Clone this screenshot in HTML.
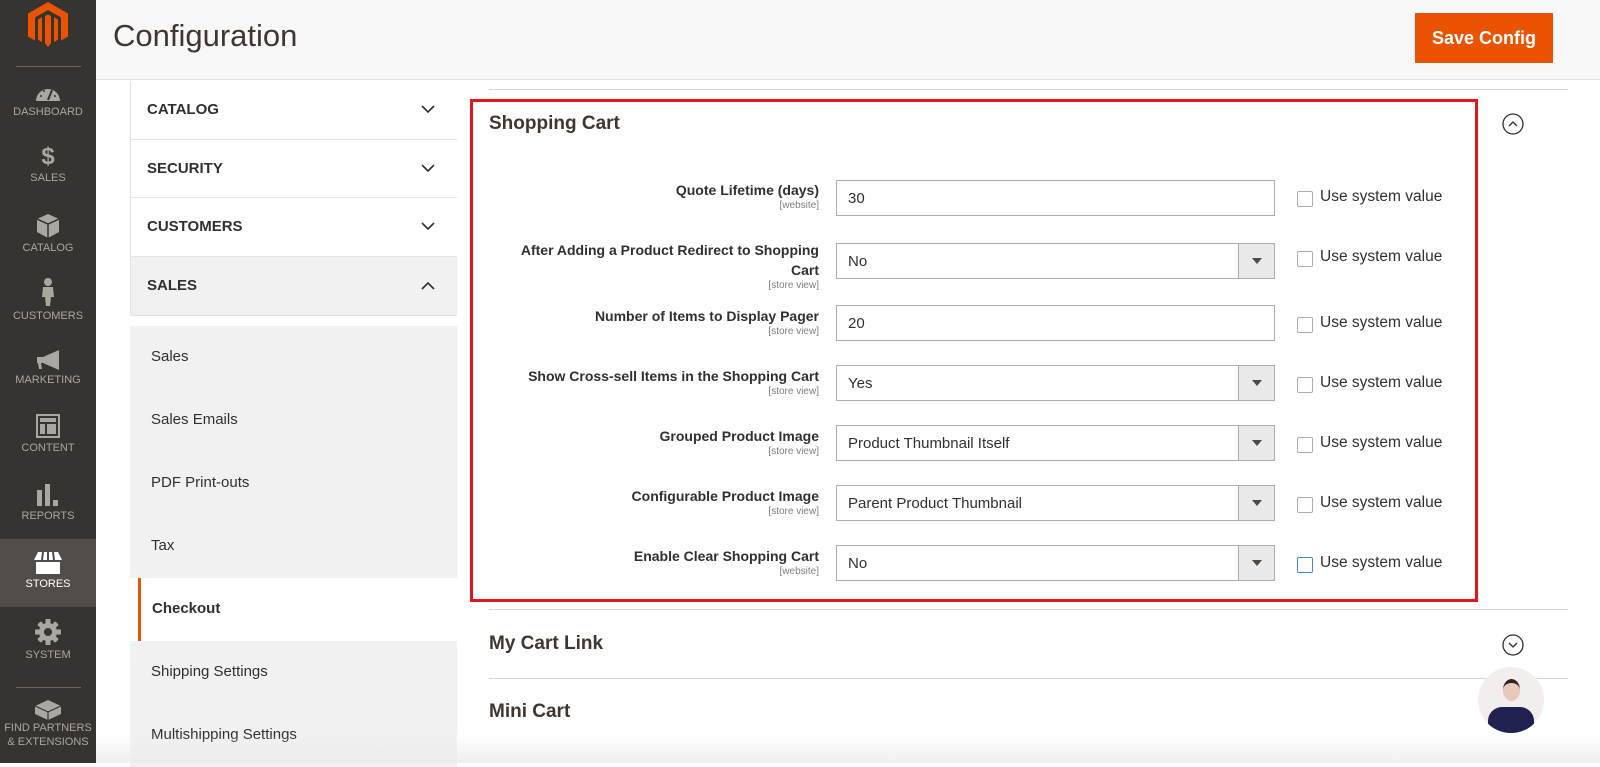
<!DOCTYPE html>
<html><head><meta charset="utf-8"><style>
*{margin:0;padding:0;box-sizing:border-box}
body{width:1600px;height:763px;overflow:hidden;background:#fff;font-family:"Liberation Sans",sans-serif;color:#303030;position:relative}
.a{position:absolute}
#side{left:0;top:0;width:96px;height:763px;background:#373330}
.si{position:absolute;left:0;width:96px;text-align:center;color:#aaa6a0;font-size:11px;letter-spacing:0}
.si svg{display:block;margin:0 auto 4px}
#hdr{left:96px;top:0;width:1504px;height:80px;background:#f8f8f8;border-bottom:1px solid #e3e3e3}
.nav{position:absolute;left:130px;width:327px;border-left:1px solid #e3e3e3;border-bottom:1px solid #e3e3e3;background:#fff;font-weight:bold;font-size:15px;color:#303030}
.nav span{position:absolute;left:16px}
.sub{position:absolute;left:130px;width:327px;height:63px;background:#f1f1f1;font-size:15px;color:#303030}
.sub span{position:absolute;left:21px;top:22px}
.lbl{position:absolute;right:781px;text-align:right;font-size:14px;font-weight:bold;color:#303030;line-height:20px}
.lbl small{display:block;font-size:10px;font-weight:normal;color:#808080;line-height:12px}
.inp{position:absolute;left:836px;width:439px;height:36px;border:1px solid #adadad;background:#fff;font-size:15px;padding:9px 0 0 11px}
.inp b{position:absolute;right:0;top:0;width:36px;height:34px;background:#e9e9e9;border-left:1px solid #adadad}
.inp b:after{content:"";position:absolute;left:13px;top:14px;border-left:5px solid transparent;border-right:5px solid transparent;border-top:6px solid #514943}
.cb{position:absolute;left:1297px;width:16px;height:16px;border:1px solid #adadad;border-radius:2px;background:#fff}
.ct{position:absolute;left:1320px;font-size:15.5px;color:#303030}
</style></head><body>
<div id="side" class="a">
 <svg class="a" style="left:28px;top:2px" width="40" height="46" viewBox="0 0 40 46"><path d="M20 0L40 11.5V34.5L33 38.5V15.5L20 8 7 15.5V38.5L0 34.5V11.5Z" fill="#eb5202"/><path d="M17 14L20 12.5 23 14V41L20 45 17 41Z" fill="#eb5202"/><path d="M10 17.5L14 15.3V40L10 37.7Z M30 17.5L26 15.3V40L30 37.7Z" fill="#eb5202"/></svg>
 <div class="a" style="left:16px;top:66px;width:65px;height:1px;background:#6b6560"></div>
 <div class="si" style="top:82px"><svg width="26" height="20" viewBox="0 0 26 20"><path d="M1 19A12 12 0 0 1 25 19Z" fill="#aaa6a0"/><path d="M13 18L17 8" stroke="#373330" stroke-width="2"/><circle cx="6" cy="14" r="1" fill="#373330"/><circle cx="9" cy="9" r="1" fill="#373330"/><circle cx="20" cy="14" r="1" fill="#373330"/></svg>DASHBOARD</div>
 <div class="si" style="top:146px"><div style="font-size:24px;font-weight:bold;line-height:22px;margin-bottom:4px">$</div>SALES</div>
 <div class="si" style="top:214px"><svg width="22" height="24" viewBox="0 0 22 24"><path d="M11 0L22 5V18L11 24 0 18V5Z" fill="#aaa6a0"/><path d="M0 5L11 10 22 5M11 10V24" stroke="#373330" stroke-width="1.5" fill="none"/></svg>CATALOG</div>
 <div class="si" style="top:278px"><svg width="14" height="28" viewBox="0 0 14 28"><circle cx="7" cy="4" r="4" fill="#aaa6a0"/><path d="M2 9H12L13 19H10L9 28H5L4 19H1Z" fill="#aaa6a0"/></svg>CUSTOMERS</div>
 <div class="si" style="top:350px"><svg width="26" height="20" viewBox="0 0 26 20"><path d="M2 7H8L24 0V20L8 13H6L7 19H4L3 13H2Z" fill="#aaa6a0"/></svg>MARKETING</div>
 <div class="si" style="top:414px"><svg width="24" height="24" viewBox="0 0 24 24"><rect x="1" y="1" width="22" height="22" fill="none" stroke="#aaa6a0" stroke-width="2"/><rect x="4" y="4" width="16" height="4" fill="#aaa6a0"/><rect x="4" y="10" width="5" height="10" fill="#aaa6a0"/><rect x="11" y="10" width="9" height="10" fill="#aaa6a0"/></svg>CONTENT</div>
 <div class="si" style="top:484px"><svg width="24" height="22" viewBox="0 0 24 22"><rect x="1" y="6" width="5" height="16" fill="#aaa6a0"/><rect x="9" y="0" width="5" height="22" fill="#aaa6a0"/><rect x="17" y="16" width="5" height="6" fill="#aaa6a0"/></svg>REPORTS</div>
 <div class="a" style="left:0;top:539px;width:96px;height:68px;background:#524d49"></div>
 <div class="si" style="top:552px;color:#fff"><svg width="28" height="22" viewBox="0 0 28 22"><path d="M4 0H24L28 8H0Z" fill="#fff"/><path d="M2 10H26V22H2Z" fill="#fff"/><path d="M9 0L8 8M14 0V8M19 0L20 8" stroke="#524d49" stroke-width="2"/></svg>STORES</div>
 <div class="si" style="top:619px"><svg width="26" height="26" viewBox="0 0 26 26"><circle cx="13" cy="13" r="9" fill="#aaa6a0"/><g stroke="#aaa6a0" stroke-width="5"><path d="M13 0V26M0 13H26M4 4L22 22M22 4L4 22"/></g><circle cx="13" cy="13" r="4" fill="#373330"/></svg>SYSTEM</div>
 <div class="a" style="left:16px;top:687px;width:65px;height:1px;background:#6b6560"></div>
 <div class="si" style="top:698px;line-height:14px"><svg width="26" height="22" viewBox="0 0 26 22" style="margin-bottom:1px"><path d="M13 2L26 8V16L13 22 0 16V8Z" fill="#aaa6a0"/><path d="M0 8L13 14 26 8M13 14V22" stroke="#373330" stroke-width="1.2" fill="none"/></svg>FIND PARTNERS<br>&amp; EXTENSIONS</div>
</div>
<div id="hdr" class="a"></div>
<div class="a" style="left:113px;top:18px;font-size:31px;color:#41362f">Configuration</div>
<div class="a" style="left:1415px;top:13px;width:138px;height:50px;background:#eb5202;color:#fff;font-weight:bold;font-size:18px;text-align:center;line-height:50px">Save Config</div>

<div class="nav" style="top:81px;height:59px;border-top:0"><span style="top:20px">CATALOG</span></div>
<div class="nav" style="top:140px;height:58px"><span style="top:20px">SECURITY</span></div>
<div class="nav" style="top:198px;height:59px"><span style="top:20px">CUSTOMERS</span></div>
<div class="nav" style="top:257px;height:59px;background:#f1f1f1"><span style="top:20px">SALES</span></div>
<svg class="a" style="left:421px;top:104px" width="14" height="210" viewBox="0 0 14 210" fill="none" stroke="#303030" stroke-width="1.6"><path d="M1 2L7 8 13 2M1 61L7 67 13 61M1 119L7 125 13 119M1 185L7 179 13 185"/></svg>
<div class="sub" style="top:326px"><span>Sales</span></div>
<div class="sub" style="top:389px"><span>Sales Emails</span></div>
<div class="sub" style="top:452px"><span>PDF Print-outs</span></div>
<div class="sub" style="top:515px"><span>Tax</span></div>
<div class="sub" style="top:578px;background:#fff;left:138px;width:319px;border-left:3px solid #eb5202"><span style="left:11px;font-weight:bold">Checkout</span></div>
<div class="sub" style="top:641px"><span>Shipping Settings</span></div>
<div class="sub" style="top:704px"><span>Multishipping Settings</span></div>

<div class="a" style="left:489px;top:89px;width:1079px;height:1px;background:#d6d6d6"></div>
<div class="a" style="left:470px;top:99px;width:1008px;height:503px;border:3px solid #e8141c"></div>
<div class="a" style="left:489px;top:113px;font-size:19px;font-weight:bold;color:#41362f">Shopping Cart</div>
<svg class="a" style="left:1502px;top:113px" width="22" height="22" viewBox="0 0 22 22" fill="none" stroke="#303030" stroke-width="1.3"><circle cx="11" cy="11" r="10"/><path d="M7 13L11 9 15 13"/></svg>

<div class="lbl" style="top:180px">Quote Lifetime (days)<small>[website]</small></div>
<div class="inp" style="top:180px">30</div>
<div class="lbl" style="top:240px">After Adding a Product Redirect to Shopping<br>Cart<small>[store view]</small></div>
<div class="inp" style="top:243px">No<b></b></div>
<div class="lbl" style="top:306px">Number of Items to Display Pager<small>[store view]</small></div>
<div class="inp" style="top:305px">20</div>
<div class="lbl" style="top:366px">Show Cross-sell Items in the Shopping Cart<small>[store view]</small></div>
<div class="inp" style="top:365px">Yes<b></b></div>
<div class="lbl" style="top:426px">Grouped Product Image<small>[store view]</small></div>
<div class="inp" style="top:425px">Product Thumbnail Itself<b></b></div>
<div class="lbl" style="top:486px">Configurable Product Image<small>[store view]</small></div>
<div class="inp" style="top:485px">Parent Product Thumbnail<b></b></div>
<div class="lbl" style="top:546px">Enable Clear Shopping Cart<small>[website]</small></div>
<div class="inp" style="top:545px">No<b></b></div>

<div class="cb" style="top:191px"></div><div class="ct" style="top:188px">Use system value</div>
<div class="cb" style="top:251px"></div><div class="ct" style="top:248px">Use system value</div>
<div class="cb" style="top:317px"></div><div class="ct" style="top:314px">Use system value</div>
<div class="cb" style="top:377px"></div><div class="ct" style="top:374px">Use system value</div>
<div class="cb" style="top:437px"></div><div class="ct" style="top:434px">Use system value</div>
<div class="cb" style="top:497px"></div><div class="ct" style="top:494px">Use system value</div>
<div class="cb" style="top:557px;border-color:#3d8ad1"></div><div class="ct" style="top:554px">Use system value</div>

<div class="a" style="left:489px;top:609px;width:1079px;height:1px;background:#d6d6d6"></div>
<div class="a" style="left:489px;top:633px;font-size:19px;font-weight:bold;color:#41362f">My Cart Link</div>
<svg class="a" style="left:1502px;top:634px" width="22" height="22" viewBox="0 0 22 22" fill="none" stroke="#303030" stroke-width="1.3"><circle cx="11" cy="11" r="10"/><path d="M7 9L11 13 15 9"/></svg>
<div class="a" style="left:489px;top:678px;width:1079px;height:1px;background:#d6d6d6"></div>
<div class="a" style="left:489px;top:701px;font-size:19px;font-weight:bold;color:#41362f">Mini Cart</div>
<div class="a" style="left:96px;top:735px;width:1504px;height:28px;background:linear-gradient(rgba(240,240,240,0),rgba(235,235,235,.8))"></div>
<div class="a" style="left:1478px;top:667px;width:66px;height:66px;border-radius:50%;background:#f3eeee;overflow:hidden">
 <div class="a" style="left:25px;top:12px;width:17px;height:22px;border-radius:50%;background:#e8c8b8;border-top:4px solid #2a2220"></div>
 <div class="a" style="left:10px;top:40px;width:46px;height:30px;border-radius:14px 14px 0 0;background:#1f2150"></div>
</div>
</body></html>
